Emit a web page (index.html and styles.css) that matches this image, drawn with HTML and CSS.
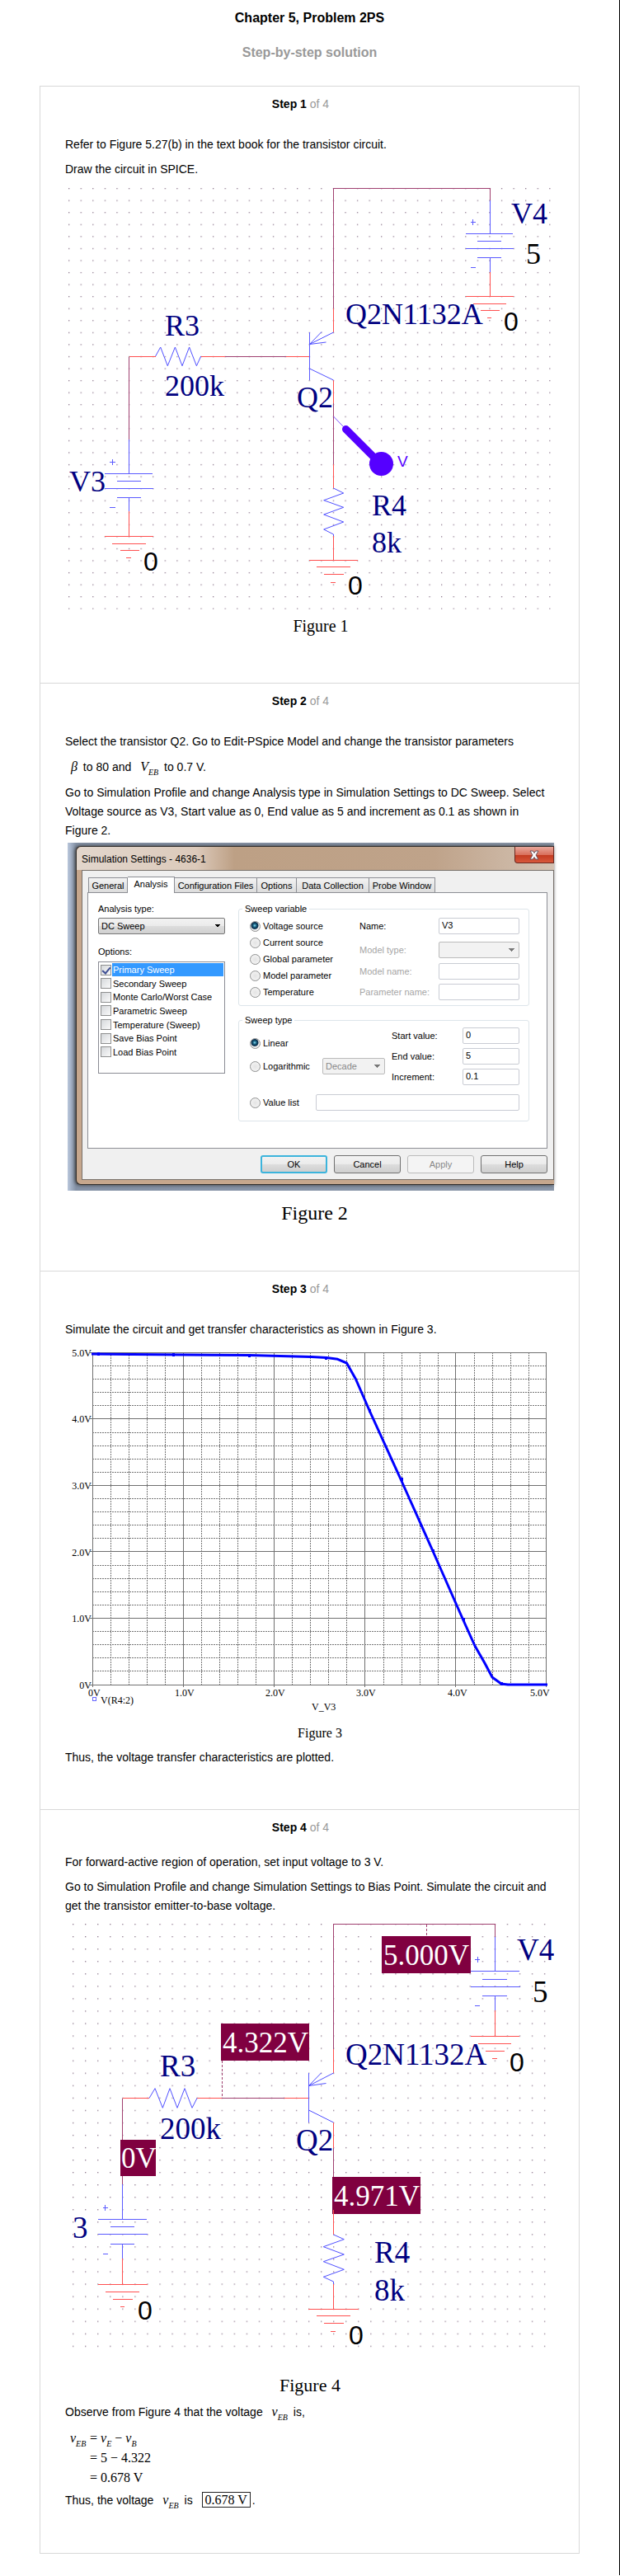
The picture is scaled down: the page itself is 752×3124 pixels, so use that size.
FILE: index.html
```html
<!DOCTYPE html>
<html lang="en">
<head>
<meta charset="utf-8">
<title>Chapter 5, Problem 2PS</title>
<link rel="stylesheet" href="styles.css">
</head>
<body>
<main class="page">
<h1 class="title">Chapter 5, Problem 2PS</h1>
<h2 class="subtitle">Step-by-step solution</h2>

<div class="card">
<section class="step">
<h3 class="step-title">Step 1 <span class="of">of 4</span></h3>
<p>Refer to Figure 5.27(b) in the text book for the transistor circuit.</p>
<p>Draw the circuit in SPICE.</p>
<figure class="figure">
<svg class="drawing" viewBox="79 220 593 557" role="img" aria-label="Figure 1">
<defs><pattern id="dots1" patternUnits="userSpaceOnUse" x="83" y="228" width="14.58" height="14.56"><rect class="dot" width="1.3" height="1.3"/></pattern></defs>
<rect x="83" y="228" width="585" height="511" fill="url(#dots1)"/>
<g class="wire"><path d="M404.5 374V228.5H594.5V243M156.5 533V432.5M273 432.5H347M404.5 489V563"/></g>
<g class="red"><path d="M404.5 374V403M156.5 432.5H189M244 432.5H273M347 432.5H375M404.5 461V489M404.5 563V592M404.5 650V679M594.5 330V359M156.5 620V650"/>
<path d="M565 359.5H623M574 368.5H614M583 376.5H606M591 385.5H596M127 650.5H186M136 659.5H177M146 667.5H169M153 676.5H159M375 679.5H434M384 687.5H425M393 696.5H417M401 706.5H407"/></g>
<g class="blue"><path d="M594.5 243V284M565 283.5H622M579 292.5H608M565 301.5H623M579 312.5H608M594.5 313V330M571 269.5H577M573.5 266V273M571 324.5H577"/>
<path d="M156.5 533V575M127 574.5H185M142 583.5H171M127 592.5H186M142 603.5H171M156.5 604V620M133 560.5H140M136.5 557V564M133 615.5H140M375.5 403V461"/></g>
<g class="blue-thin"><path d="M404.5 403L375.5 417.5M390 402.5L375.5 417.5L395.5 415M375.5 447L404.5 461M188.6 432L194.7 421L203.3 443.7L212.4 421L221 443.7L229.6 421L238.4 443.7L243.7 432M404.5 592L416.7 598L392.7 606.7L416.7 615.3L392.7 624L416.7 633L392.7 642L404.5 648V650"/></g>
<path class="probe-wire" d="M404.5 505L417 518"/><path class="probe-arm" d="M419.5 520.5L462 563"/><circle class="probe-head" cx="462.5" cy="562.5" r="14.5"/>
<text class="probe-label" x="482" y="566">V</text>
<g class="part"><text x="620" y="271">V4</text><text x="419" y="393">Q2N1132A</text><text x="200" y="407">R3</text><text x="200" y="480">200k</text><text x="360" y="494">Q2</text><text x="84" y="596">V3</text><text x="451" y="625">R4</text><text x="451" y="670">8k</text><text class="value" x="638" y="320">5</text></g>
<g class="node"><text x="611" y="401">0</text><text x="174" y="692">0</text><text x="422" y="721">0</text></g>
<text class="caption-20" x="389" y="766">Figure 1</text>
</svg>
</figure>
</section>

<section class="step">
<h3 class="step-title">Step 2 <span class="of">of 4</span></h3>
<p>Select the transistor Q2. Go to Edit-PSpice Model and change the transistor parameters</p>
<p class="with-math"><i class="math">β</i> to 80 and <i class="math">V<sub>EB</sub></i> to 0.7 V.</p>
<p>Go to Simulation Profile and change Analysis type in Simulation Settings to DC Sweep. Select Voltage source as V3, Start value as 0, End value as 5 and increment as 0.1 as shown in Figure 2.</p>
<figure class="figure">
<div class="backdrop">
<div class="window">
<div class="titlebar"><span class="window-title">Simulation Settings - 4636-1</span>
<button class="close" type="button" aria-label="Close"><svg viewBox="0 0 12 12" width="12" height="12"><path d="M1 1h3.400l1.600 2.500L7.600 1H11L8 6l3 5H7.600L6 8.500 4.400 11H1l3-5z" fill="#fff" stroke="#6b5560" stroke-width="1"/></svg></button></div>
<div class="client">
<div class="tabs"><button class="tab" type="button">General</button><button class="tab active" type="button">Analysis</button><button class="tab wide" type="button">Configuration Files</button><button class="tab" type="button">Options</button><button class="tab data" type="button">Data Collection</button><button class="tab probe" type="button">Probe Window</button></div>
<div class="panel">
<div class="left">
<label for="atype">Analysis type:</label>
<select id="atype" class="combo"><option>DC Sweep</option></select>
<div class="options-label">Options:</div>
<div class="list">
<label class="selected"><input type="checkbox" checked><span>Primary Sweep</span></label>
<label><input type="checkbox"><span>Secondary Sweep</span></label>
<label><input type="checkbox"><span>Monte Carlo/Worst Case</span></label>
<label><input type="checkbox"><span>Parametric Sweep</span></label>
<label><input type="checkbox"><span>Temperature (Sweep)</span></label>
<label><input type="checkbox"><span>Save Bias Point</span></label>
<label><input type="checkbox"><span>Load Bias Point</span></label>
</div>
</div>
<div class="right">
<fieldset><legend>Sweep variable</legend>
<div class="columns">
<div class="radios">
<label><input type="radio" name="var" checked>Voltage source</label>
<label><input type="radio" name="var">Current source</label>
<label><input type="radio" name="var">Global parameter</label>
<label><input type="radio" name="var">Model parameter</label>
<label><input type="radio" name="var">Temperature</label>
</div>
<div class="fields">
<div class="field first"><label for="f-name">Name:</label><input id="f-name" type="text" value="V3"></div>
<div class="field off"><label for="f-type">Model type:</label><select id="f-type" class="combo" disabled><option></option></select></div>
<div class="field off"><label for="f-model">Model name:</label><input id="f-model" type="text" disabled></div>
<div class="field off"><label for="f-param">Parameter name:</label><input id="f-param" type="text" disabled></div>
</div>
</div>
</fieldset>
<fieldset class="type"><legend>Sweep type</legend>
<div class="columns">
<div class="radios scale">
<label><input type="radio" name="type" checked>Linear</label>
<div class="log"><label><input type="radio" name="type">Logarithmic</label><select class="combo" aria-label="Logarithmic scale" disabled><option>Decade</option></select></div>
</div>
<div class="fields range">
<div class="field"><label for="f-start">Start value:</label><input id="f-start" type="text" value="0"></div>
<div class="field"><label for="f-end">End value:</label><input id="f-end" type="text" value="5"></div>
<div class="field"><label for="f-inc">Increment:</label><input id="f-inc" type="text" value="0.1"></div>
</div>
</div>
<div class="value-list radios"><label><input type="radio" name="type">Value list</label><input type="text" aria-label="Value list"></div>
</fieldset>
</div>
</div>
<div class="buttons"><button class="btn default" type="button">OK</button><button class="btn" type="button">Cancel</button><button class="btn" type="button" disabled>Apply</button><button class="btn" type="button">Help</button></div>
</div>
</div>
</div>
<figcaption class="caption">Figure 2</figcaption>
</figure>
</section>

<section class="step">
<h3 class="step-title">Step 3 <span class="of">of 4</span></h3>
<p>Simulate the circuit and get transfer characteristics as shown in Figure 3.</p>
<figure class="figure">
<svg class="drawing" viewBox="79 1627 593 486" role="img" aria-label="Figure 3">
<g class="minor">
<path d="M134.500 1640V2043M156.500 1640V2043M178.500 1640V2043M200.500 1640V2043M244.500 1640V2043M266.500 1640V2043M288.500 1640V2043M310.500 1640V2043M354.500 1640V2043M376.500 1640V2043M398.500 1640V2043M420.500 1640V2043M465.500 1640V2043M487.500 1640V2043M509.500 1640V2043M531.500 1640V2043M575.500 1640V2043M597.500 1640V2043M619.500 1640V2043M641.500 1640V2043"/>
<path d="M112 1656.500H663M112 1672.500H663M112 1688.500H663M112 1704.500H663M112 1737.500H663M112 1753.500H663M112 1769.500H663M112 1785.500H663M112 1817.500H663M112 1833.500H663M112 1849.500H663M112 1865.500H663M112 1898.500H663M112 1914.500H663M112 1930.500H663M112 1946.500H663M112 1978.500H663M112 1994.500H663M112 2010.500H663M112 2026.500H663"/></g>
<path class="major" d="M112.500 1640V2046M222.500 1640V2046M332.500 1640V2046M442.500 1640V2046M552.500 1640V2046M662.500 1640V2046M109 1640.500H663M109 1720.500H663M109 1801.500H663M109 1881.500H663M109 1962.500H663M109 2043.500H663"/>
<polyline class="curve" points="111,1642 161,1642.500 302,1643.500 378,1645.500 396,1646.500 409.500,1648.300 420.500,1653 431.500,1672.500 448.500,1711.500 487,1796 525,1881 562,1965 576,1996 588,2017 597,2034 608,2042 616,2043 664,2043"/>
<path class="mark" d="M118 1642h3M209 1643h3M301 1644h3M394 1647h3M447 1711h3M486 1794h3M524 1881h3M561 1964h3M607 2042h3"/>
<g class="tick end"><text x="111" y="1645">5.0V</text><text x="111" y="1725">4.0V</text><text x="111" y="1806">3.0V</text><text x="111" y="1887">2.0V</text><text x="111" y="1967">1.0V</text><text x="111" y="2048">0V</text></g>
<g class="tick"><text x="107" y="2057">0V</text><text x="212" y="2057">1.0V</text><text x="322" y="2057">2.0V</text><text x="432" y="2057">3.0V</text><text x="543" y="2057">4.0V</text><text x="643" y="2057">5.0V</text><text x="122" y="2066">V(R4:2)</text><text x="378" y="2074">V_V3</text></g>
<rect class="legend-mark" x="112.500" y="2058.500" width="4" height="4"/>
<text class="caption-16" x="388" y="2107">Figure 3</text>
</svg>
</figure>
<p>Thus, the voltage transfer characteristics are plotted.</p>
</section>

<section class="step compact">
<h3 class="step-title">Step 4 <span class="of">of 4</span></h3>
<p>For forward-active region of operation, set input voltage to 3 V.</p>
<p>Go to Simulation Profile and change Simulation Settings to Bias Point. Simulate the circuit and get the transistor emitter-to-base voltage.</p>
<figure class="figure">
<svg class="drawing" viewBox="79 2326 593 580" role="img" aria-label="Figure 4">
<defs><pattern id="dots4" patternUnits="userSpaceOnUse" x="88" y="2333" width="15.050" height="15.050"><rect class="dot" width="1.300" height="1.300"/></pattern></defs>
<rect x="88" y="2333" width="574" height="514" fill="url(#dots4)"/>
<g class="wire"><path d="M404.500 2485V2333.500H600.500V2349M148.500 2649V2544.500M269 2544.500H345M404.500 2605V2641"/><path stroke-dasharray="3 2" d="M517.500 2334V2348M269.500 2499V2544"/></g>
<g class="boxes"><rect x="463" y="2348" width="108" height="45"/><rect x="268" y="2454" width="107" height="45"/><rect x="146" y="2595" width="43" height="44"/><rect x="403" y="2640" width="107" height="45"/></g>
<g class="red"><path d="M404.500 2485V2514M148.500 2544.500H181M239 2544.500H269M345 2544.500H374M404.500 2574V2605M404.500 2680V2710M404.500 2770V2800M600.500 2438V2469M148.500 2739V2770"/>
<path d="M571 2469.500H630M580 2478.500H620M589 2487.500H612M597 2496.500H603M119 2770.500H179M128 2779.500H169M137 2788.500H161M146 2797.500H151M374 2800.500H435M384 2808.500H425M393 2817.500H417M401 2827.500H407"/></g>
<g class="blue"><path d="M600.500 2349V2391M571 2390.500H630M585 2400.500H615M571 2409.500H631M585 2420.500H615M600.500 2421V2438M576 2376.500H582M579.500 2373V2380M576 2432.500H582"/>
<path d="M148.500 2649V2692M119 2691.500H178M134 2700.500H163M119 2709.500H179M134 2721.500H163M148.500 2722V2739M125 2677.500H131M127.500 2674V2681M125 2733.500H131M374.500 2514V2574"/></g>
<g class="blue-thin"><path d="M404.500 2514L374.500 2529.500M389.500 2514L374.500 2529.500L395.500 2526.500M374.500 2559L404.500 2574M181 2544.500L188 2532.700L197.300 2556.300L206 2532.700L215 2556.300L224 2532.700L233 2556.300L239 2544.500M404.500 2710L417.300 2715.700L392.300 2724.700L417.300 2734L392.300 2742.700L417.300 2752.300L392.300 2761.300L404.500 2767V2770"/></g>
<g class="part large"><text x="627" y="2377">V4</text><text x="419" y="2504">Q2N1132A</text><text x="194" y="2518">R3</text><text x="194" y="2594">200k</text><text x="359" y="2608">Q2</text><text x="88" y="2714">3</text><text x="454" y="2744">R4</text><text x="454" y="2790">8k</text><text class="value" x="646" y="2428">5</text></g>
<g class="reading"><text x="465" y="2383">5.000V</text><text x="270" y="2489">4.322V</text><text x="147" y="2629">0V</text><text x="405" y="2675">4.971V</text></g>
<g class="node"><text x="618" y="2512">0</text><text x="167" y="2813">0</text><text x="423" y="2843">0</text></g>
<text class="caption-22" x="376" y="2900">Figure 4</text>
</svg>
</figure>
<p class="with-math">Observe from Figure 4 that the voltage <i class="math">v<sub>EB</sub></i> is,</p>
<div class="equation">
<span><i>v<sub>EB</sub></i></span><span>= <i>v<sub>E</sub></i> − <i>v<sub>B</sub></i></span>
<span></span><span>= 5 − 4.322</span>
<span></span><span>= 0.678 V</span>
</div>
<p class="with-math">Thus, the voltage <i class="math">v<sub>EB</sub></i> is <span class="answer">0.678 V</span>.</p>
</section>
</div>
</main>
</body>
</html>
```

FILE: styles.css
```css
* { box-sizing: border-box; }

body {
  margin: 0;
  background: #fff;
  border-right: 1px solid #000;
  color: #000;
  font: 14px/23px "Liberation Sans", Arial, sans-serif;
}

.page { padding: 10px 48px 26px; }

.title, .subtitle {
  margin: 0;
  font-size: 16px;
  line-height: 24px;
  text-align: center;
}
.subtitle { margin: 18px 0 28px; color: #999; }

.card { border: 1px solid #d9d9d9; }
.step { padding: 10px 30px 44px; }
.step + .step { border-top: 1px solid #d9d9d9; }

.step-title {
  margin: 0 0 26px;
  padding-right: 22px;
  font-size: 14px;
  text-align: center;
}
.compact .step-title { margin-bottom: 19px; }
.of { color: #999; font-weight: normal; }

p { margin: 0 0 7px; }
.figure { margin: -4px 0 7px; }

/* Formulas */
.math, .equation, .answer {
  font-family: "Liberation Serif", "Times New Roman", serif;
  font-size: 16px;
}
.math { margin: 0 3px 0 7px; }
sub { font-size: 10px; line-height: 0; vertical-align: -5px; }
.with-math { margin-bottom: 8px; }
.equation {
  display: grid;
  grid-template-columns: 24px 1fr;
  margin: 0 0 3px 6px;
  line-height: 24px;
}
.answer { margin: 0 2px 0 7px; padding: 0 3px; border: 1px solid #222; }

/* Circuit and chart drawings */
.drawing { display: block; width: 100%; height: auto; }
.dot { fill: #8f7a8f; }
.wire, .red, .blue { fill: none; stroke-width: 1; shape-rendering: crispEdges; }
.wire { stroke: #a04070; }
.red { stroke: #ff5050; }
.blue { stroke: #5a5aff; }
.blue-thin { fill: none; stroke: #5050ff; stroke-width: 1; }
.probe-wire { stroke: #7a50ff; }
.probe-arm { stroke: #5500ff; stroke-width: 9; stroke-linecap: round; }
.probe-head { fill: #5500ff; }
.probe-label { font: 19px "Liberation Sans", Arial, sans-serif; fill: #5500ff; }
.part, .reading { font: 36px "Liberation Serif", "Times New Roman", serif; fill: #000080; }
.large { font-size: 37px; }
.value { fill: #000; }
.reading { font-size: 35px; fill: #fff; }
.node { font: 32px "Liberation Sans", Arial, sans-serif; }
.boxes { fill: #800040; }
.minor { stroke: #777; stroke-dasharray: 2 1; fill: none; shape-rendering: crispEdges; }
.major { stroke: #707070; fill: none; shape-rendering: crispEdges; }
.curve { fill: none; stroke: #00f; stroke-width: 3; stroke-linejoin: round; }
.mark { stroke: #00f; stroke-width: 4; }
.legend-mark { fill: none; stroke: #66f; }
.tick { font: 12px "Liberation Serif", "Times New Roman", serif; }
.end { text-anchor: end; }
.caption-16, .caption-20, .caption-22 {
  font: 16px "Liberation Serif", "Times New Roman", serif;
  text-anchor: middle;
}
.caption-20 { font-size: 20px; }
.caption-22 { font-size: 22px; }
.caption {
  margin-top: 13px;
  padding: 0 0 5px 12px;
  font: 24px/28px "Liberation Serif", "Times New Roman", serif;
  text-align: center;
}

/* Simulation settings window */
.backdrop {
  margin-left: 3px;
  padding: 4px 0 7px 10px;
  background: linear-gradient(90deg, #b9c7dc, #8592a6 10px, #8c98aa);
  font-size: 11px;
  line-height: 14px;
}
.window {
  border: 1px solid #33302e;
  border-right: 0;
  border-radius: 6px 0 0 6px;
  background: #c6a78d;
  padding: 0 0 5px 6px;
  box-shadow: -1px 0 4px #333;
}
.titlebar {
  display: flex;
  justify-content: space-between;
  align-items: flex-start;
  height: 28px;
  margin-left: -6px;
  padding-left: 6px;
  border-radius: 6px 0 0 0;
  background: linear-gradient(90deg, #e2d6cc, #dccabb 25%, #bda085 33%, #bfa38a 75%, #d3c2b3);
}
.window-title { font-size: 12px; line-height: 30px; }
.close {
  display: flex;
  justify-content: center;
  align-items: center;
  width: 48px;
  height: 20px;
  padding: 0;
  border: 1px solid #6a2820;
  border-top: 0;
  border-radius: 0 0 0 4px;
  background: linear-gradient(#e8a79b, #d9705c 50%, #c23a20 52%, #d8583c);
}
.client {
  padding: 7px 7px 7px 6px;
  border: 1px solid #77706a;
  background: #f0f0f0;
}
.tabs { display: flex; align-items: flex-end; padding-left: 1px; }
.tab {
  width: 48px;
  height: 18px;
  padding: 0;
  border: 1px solid #8c8e94;
  border-left-width: 0;
  border-bottom: 0;
  background: linear-gradient(#f3f3f3, #dcdcdc);
  color: #000;
  font: inherit;
  white-space: nowrap;
}
.tab:first-child { border-left-width: 1px; }
.tab.active {
  position: relative;
  width: 57px;
  height: 20px;
  margin-bottom: -1px;
  padding-bottom: 3px;
  background: #fff;
}
.tab.wide { width: 100px; }
.tab.data { width: 88px; }
.tab.probe { width: 80px; }
.panel {
  display: grid;
  grid-template-columns: 154px 1fr;
  gap: 16px;
  min-height: 311px;
  padding: 12px 21px 12px 12px;
  border: 1px solid #8c8e94;
  background: #fff;
}
.left > label { display: block; margin-bottom: 4px; }
.combo {
  appearance: none;
  display: block;
  width: 100%;
  height: 20px;
  padding: 0 3px;
  border: 1px solid #777;
  border-radius: 2px;
  background:
    linear-gradient(-135deg, #000 50%, transparent 50%) right 8px center / 4px 4px no-repeat,
    linear-gradient(135deg, #000 50%, transparent 50%) right 4px center / 4px 4px no-repeat,
    linear-gradient(#f2f2f2, #ebebeb 50%, #dddddd 50%, #d0d0d0);
  color: #000;
  font: inherit;
}
.combo:disabled {
  border-color: #bbb;
  background:
    linear-gradient(-135deg, #777 50%, transparent 50%) right 8px center / 4px 4px no-repeat,
    linear-gradient(135deg, #777 50%, transparent 50%) right 4px center / 4px 4px no-repeat,
    #f2f2f2;
  color: #888;
  opacity: 1;
}
.options-label { margin: 14px 0 5px; }
.list {
  display: grid;
  grid-template-rows: repeat(7, 1fr);
  height: 136px;
  padding: 1px 1px 17px 2px;
  border: 1px solid #8a8c94;
}
.list label { display: flex; align-items: center; gap: 1px; }
.list span { flex: 1; padding: 1px 0 1px 1px; }
.selected span { background: #39f; color: #fff; }
.list input {
  appearance: none;
  display: grid;
  place-items: center;
  width: 13px;
  height: 13px;
  margin: 0;
  border: 1px solid #8e8f8f;
  background: linear-gradient(135deg, #d5d8db, #fafafa);
}
.list input:checked::after {
  content: "";
  width: 4px;
  height: 8px;
  border: solid #3f4f94;
  border-width: 0 2px 2px 0;
  transform: rotate(40deg);
}
fieldset {
  min-width: 0;
  margin: 0 0 10px;
  padding: 4px 11px 6px 4px;
  border: 1px solid #dde5ea;
  border-radius: 3px;
}
legend { padding: 0 3px; }
.columns { display: flex; justify-content: space-between; padding-left: 9px; }
.radios label { display: flex; align-items: center; gap: 3px; height: 20px; }
.radios input[type="radio"] {
  appearance: none;
  flex: none;
  width: 13px;
  height: 13px;
  margin: 0;
  border: 1px solid #8e8f8f;
  border-radius: 50%;
  background: radial-gradient(#e4e4e4, #f8f8f8);
}
.radios input[type="radio"]:checked {
  background: radial-gradient(circle at 45% 40%, #8fe0fa 0, #17617f 2px, #0b2c4a 4px, #eee 5px);
}
.fields { display: grid; gap: 5px; }
.field { display: grid; grid-template-columns: 96px 98px; align-items: center; }
.field.first { margin-bottom: 4px; }
.off label { color: #a5a5a5; }
input[type="text"] {
  width: 100%;
  height: 20px;
  padding: 0 3px 3px;
  border: 1px solid #c9ccd4;
  border-radius: 2px;
  background: #fff;
  color: #000;
  font: inherit;
}
.type { margin: 0; padding-top: 2px; padding-bottom: 12px; }
.scale { display: grid; align-content: start; gap: 8px; padding-top: 9px; }
.log { display: grid; grid-template-columns: 88px 76px; }
.range .field { grid-template-columns: 86px 69px; }
.value-list {
  display: grid;
  grid-template-columns: 80px 1fr;
  margin-top: 11px;
  padding-left: 9px;
}
.buttons { display: flex; justify-content: flex-end; gap: 8px; margin-top: 8px; }
.btn {
  width: 81px;
  height: 22px;
  padding: 0;
  border: 1px solid #707070;
  border-radius: 3px;
  background: linear-gradient(#f2f2f2, #ebebeb 50%, #dddddd 50%, #cfcfcf);
  color: #000;
  font: inherit;
}
.btn.default { border: 2px solid #3cb4dc; }
.btn:disabled { border-color: #bbb; background: #f4f4f4; color: #888; }
```
